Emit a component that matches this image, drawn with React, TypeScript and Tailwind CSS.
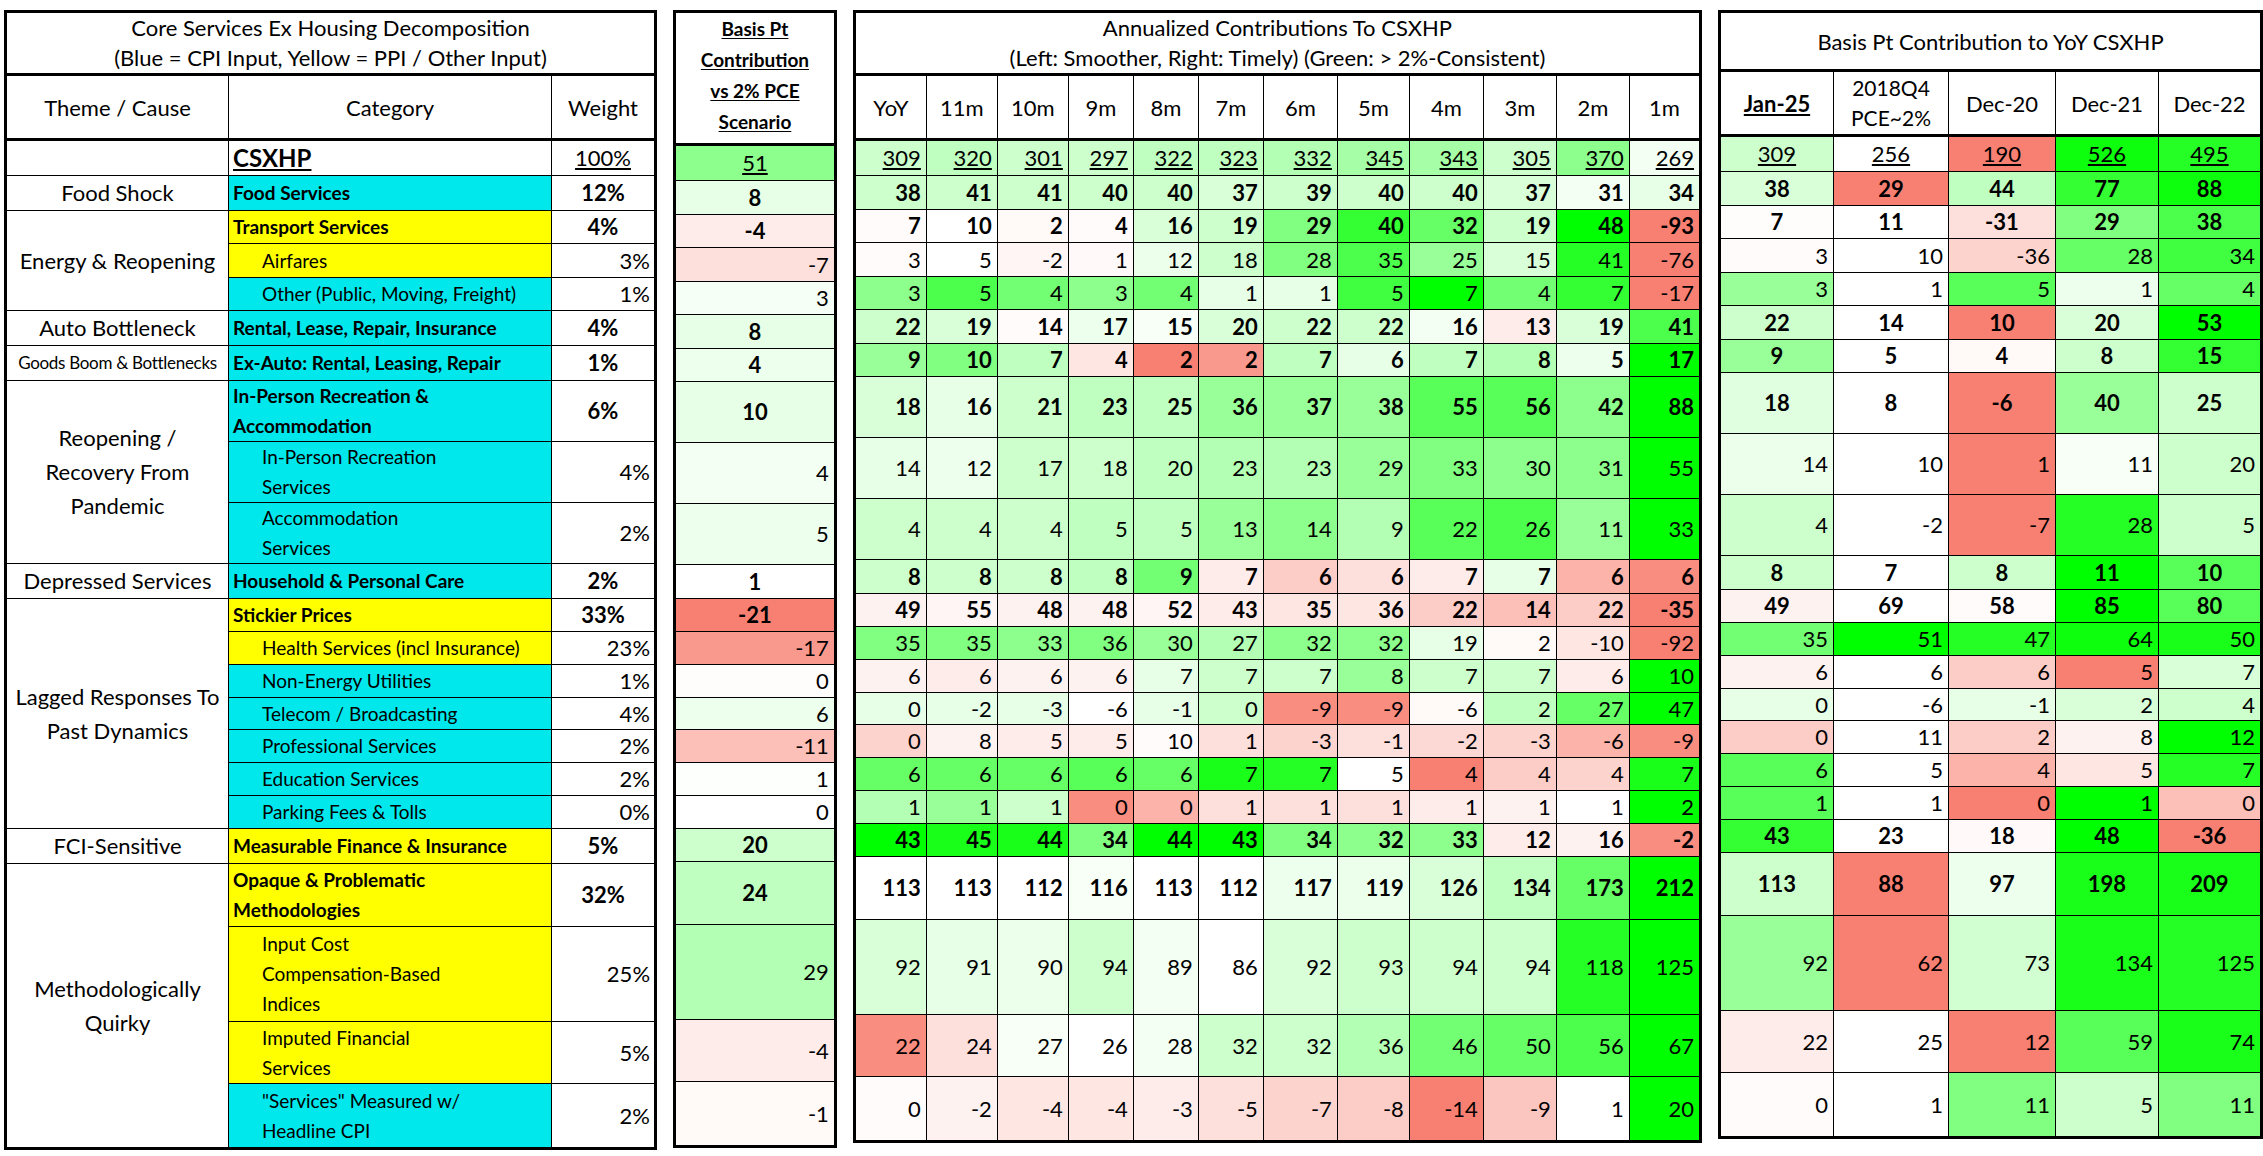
import React from "react";

type Cell = [number, number];
type Row = {
  cat: string[];
  kind: "total" | "main" | "sub";
  bg: "cyan" | "yellow" | "none";
  w: string;
  b: Cell;
  a: Cell[];
  r: Cell[];
  h: string;
  theme?: { lines: string[]; span: number; small?: boolean };
};

/* shade: + = green (0..10), - = red (0..-10) */
function shade(v: number) {
  if (v >= 0) {
    const c = Math.round(255 * (1 - v / 10));
    return `rgb(${c},255,${c})`;
  }
  const t = -v / 10;
  return `rgb(${Math.round(255 - 7 * t)},${Math.round(255 - 127 * t)},${Math.round(255 - 141 * t)})`;
}

const rows: Row[] = [
  {
    theme: { lines: [""], span: 1 },
    cat: ["CSXHP"], kind: "total", bg: "none", w: "100%", b: [51, 4.5], h: "h-[36px]",
    a: [[309, 2], [320, 2.5], [301, 2], [297, 2], [322, 2.5], [323, 2.5], [332, 3], [345, 3.5], [343, 3.5], [305, 2], [370, 4.5], [269, 0.5]],
    r: [[309, 2], [256, 0], [190, -10], [526, 9.5], [495, 8.5]],
  },
  {
    theme: { lines: ["Food Shock"], span: 1 },
    cat: ["Food Services"], kind: "main", bg: "cyan", w: "12%", b: [8, 1], h: "h-[34px]",
    a: [[38, 2], [41, 2], [41, 2], [40, 2], [40, 2], [37, 1.5], [39, 2], [40, 2], [40, 2], [37, 1.5], [31, 0.5], [34, 1]],
    r: [[38, 1.5], [29, -10], [44, 2.5], [77, 8], [88, 9.5]],
  },
  {
    theme: { lines: ["Energy & Reopening"], span: 3 },
    cat: ["Transport Services"], kind: "main", bg: "yellow", w: "4%", b: [-4, -1.5], h: "h-[33px]",
    a: [[7, -0.3], [10, 0], [2, -0.5], [4, -0.3], [16, 1.5], [19, 2], [29, 5], [40, 8], [32, 6], [19, 2], [48, 10], [-93, -10]],
    r: [[7, -0.2], [11, 0], [-31, -2.5], [29, 5], [38, 7]],
  },
  {
    cat: ["Airfares"], kind: "sub", bg: "yellow", w: "3%", b: [-7, -2.5], h: "h-[34px]",
    a: [[3, -0.3], [5, 0], [-2, -0.8], [1, -0.4], [12, 0.8], [18, 2], [28, 5], [35, 7], [25, 4], [15, 1.5], [41, 8.5], [-76, -10]],
    r: [[3, -0.3], [10, 0], [-36, -3.5], [28, 6], [34, 7.5]],
  },
  {
    cat: ["Other (Public, Moving, Freight)"], kind: "sub", bg: "cyan", w: "1%", b: [3, 0.4], h: "h-[33px]",
    a: [[3, 4.5], [5, 7], [4, 5.5], [3, 4.5], [4, 5.5], [1, 1], [1, 1], [5, 7.5], [7, 10], [4, 5.5], [7, 8], [-17, -10]],
    r: [[3, 4], [1, 0], [5, 6.5], [1, 0.7], [4, 6]],
  },
  {
    theme: { lines: ["Auto Bottleneck"], span: 1 },
    cat: ["Rental, Lease, Repair, Insurance"], kind: "main", bg: "cyan", w: "4%", b: [8, 1], h: "h-[34px]",
    a: [[22, 2], [19, 1.5], [14, -0.3], [17, 0.7], [15, 0.3], [20, 1.5], [22, 2], [22, 2], [16, 0.5], [13, -1.5], [19, 1.5], [41, 7]],
    r: [[22, 2], [14, 0], [10, -10], [20, 1.5], [53, 10]],
  },
  {
    theme: { lines: ["Goods Boom & Bottlenecks"], span: 1, small: true },
    cat: ["Ex-Auto: Rental, Leasing, Repair"], kind: "main", bg: "cyan", w: "1%", b: [4, 0.7], h: "h-[33px]",
    a: [[9, 4], [10, 5], [7, 2.5], [4, -2], [2, -10], [2, -8], [7, 2.5], [6, 1], [7, 2.5], [8, 3], [5, 0.7], [17, 10]],
    r: [[9, 4], [5, 0], [4, -0.5], [8, 2], [15, 8]],
  },
  {
    theme: { lines: ["Reopening /", "Recovery From", "Pandemic"], span: 3 },
    cat: ["In-Person Recreation &", "Accommodation"], kind: "main", bg: "cyan", w: "6%", b: [10, 1], h: "h-[61px]",
    a: [[18, 1.5], [16, 1], [21, 2], [23, 2.5], [25, 2.5], [36, 4], [37, 4], [38, 4], [55, 6.5], [56, 6.5], [42, 4.5], [88, 10]],
    r: [[18, 1.2], [8, 0], [-6, -10], [40, 4], [25, 2]],
  },
  {
    cat: ["In-Person Recreation", "Services"], kind: "sub", bg: "cyan", w: "4%", b: [4, 0.5], h: "h-[61px]",
    a: [[14, 1], [12, 0.7], [17, 2], [18, 2], [20, 2.5], [23, 3], [23, 3], [29, 4], [33, 5], [30, 4.5], [31, 4.5], [55, 10]],
    r: [[14, 0.8], [10, 0], [1, -10], [11, 0.3], [20, 2]],
  },
  {
    cat: ["Accommodation", "Services"], kind: "sub", bg: "cyan", w: "2%", b: [5, 0.7], h: "h-[61px]",
    a: [[4, 2], [4, 2], [4, 2], [5, 2.5], [5, 2.5], [13, 4], [14, 4.5], [9, 3], [22, 6.5], [26, 7], [11, 4], [33, 10]],
    r: [[4, 2], [-2, 0], [-7, -10], [28, 8.5], [5, 2]],
  },
  {
    theme: { lines: ["Depressed Services"], span: 1 },
    cat: ["Household & Personal Care"], kind: "main", bg: "cyan", w: "2%", b: [1, 0], h: "h-[34px]",
    a: [[8, 2], [8, 2], [8, 2], [8, 2.5], [9, 5.5], [7, -1.5], [6, -4], [6, -2.5], [7, -1.5], [7, 1], [6, -6], [6, -9]],
    r: [[8, 2], [7, 0], [8, 2], [11, 10], [10, 6.5]],
  },
  {
    theme: { lines: ["Lagged Responses To", "Past Dynamics"], span: 7 },
    cat: ["Stickier Prices"], kind: "main", bg: "yellow", w: "33%", b: [-21, -10], h: "h-[33px]",
    a: [[49, -1], [55, -0.8], [48, -1], [48, -1], [52, -0.8], [43, -1.5], [35, -2], [36, -2], [22, -4], [14, -5], [22, -4], [-35, -10]],
    r: [[49, -1], [69, 0], [58, -0.3], [85, 10], [80, 6.5]],
  },
  {
    cat: ["Health Services (incl Insurance)"], kind: "sub", bg: "yellow", w: "23%", b: [-17, -8], h: "h-[33px]",
    a: [[35, 5], [35, 5], [33, 4.5], [36, 5], [30, 4], [27, 3], [32, 4.5], [32, 4.5], [19, 1], [2, -0.5], [-10, -2], [-92, -10]],
    r: [[35, 5.5], [51, 10], [47, 8.5], [64, 9.5], [50, 9]],
  },
  {
    cat: ["Non-Energy Utilities"], kind: "sub", bg: "cyan", w: "1%", b: [0, -0.2], h: "h-[33px]",
    a: [[6, -1], [6, -1.5], [6, -1], [6, -1], [7, 1], [7, 2], [7, 2], [8, 4], [7, 2], [7, 2], [6, -1.5], [10, 10]],
    r: [[6, -1], [6, 0], [6, -4], [5, -10], [7, 1.5]],
  },
  {
    cat: ["Telecom / Broadcasting"], kind: "sub", bg: "cyan", w: "4%", b: [6, 0.7], h: "h-[32px]",
    a: [[0, 1], [-2, 1], [-3, 1], [-6, 0], [-1, 1], [0, 2], [-9, -9], [-9, -9], [-6, -0.5], [2, 2.5], [27, 6], [47, 10]],
    r: [[0, 1], [-6, 0], [-1, 1], [2, 1.5], [4, 2]],
  },
  {
    cat: ["Professional Services"], kind: "sub", bg: "cyan", w: "2%", b: [-11, -5], h: "h-[33px]",
    a: [[0, -3.5], [8, -1], [5, -1.5], [5, -1.5], [10, -0.3], [1, -2.5], [-3, -3.5], [-1, -2.5], [-2, -3], [-3, -3.5], [-6, -6], [-9, -9]],
    r: [[0, -4], [11, 0], [2, -4], [8, -1], [12, 10]],
  },
  {
    cat: ["Education Services"], kind: "sub", bg: "cyan", w: "2%", b: [1, 0.1], h: "h-[33px]",
    a: [[6, 6], [6, 6], [6, 6], [6, 6.5], [6, 6], [7, 9], [7, 8.5], [5, 0], [4, -10], [4, -4], [4, -3.5], [7, 9]],
    r: [[6, 6.5], [5, 0], [4, -6], [5, -2], [7, 8.5]],
  },
  {
    cat: ["Parking Fees & Tolls"], kind: "sub", bg: "cyan", w: "0%", b: [0, 0], h: "h-[33px]",
    a: [[1, 3], [1, 4], [1, 2], [0, -9], [0, -6], [1, -2.5], [1, -2.5], [1, -2.5], [1, -1.5], [1, -1], [1, 0], [2, 10]],
    r: [[1, 6.5], [1, 0], [0, -10], [1, 10], [0, -5]],
  },
  {
    theme: { lines: ["FCI-Sensitive"], span: 1 },
    cat: ["Measurable Finance & Insurance"], kind: "main", bg: "yellow", w: "5%", b: [20, 2], h: "h-[33px]",
    a: [[43, 10], [45, 9], [44, 9], [34, 5], [44, 10], [43, 10], [34, 5], [32, 4.5], [33, 4.5], [12, -1.5], [16, -1], [-2, -9]],
    r: [[43, 8], [23, 0], [18, -0.4], [48, 10], [-36, -10]],
  },
  {
    theme: { lines: ["Methodologically", "Quirky"], span: 4 },
    cat: ["Opaque & Problematic", "Methodologies"], kind: "main", bg: "yellow", w: "32%", b: [24, 2.5], h: "h-[63px]",
    a: [[113, 0], [113, 0], [112, 0], [116, 0.3], [113, 0], [112, 0], [117, 0.7], [119, 0.8], [126, 1.5], [134, 2.5], [173, 6], [212, 10]],
    r: [[113, 2], [88, -10], [97, 0.7], [198, 9], [209, 9]],
  },
  {
    cat: ["Input Cost", "Compensation-Based", "Indices"], kind: "sub", bg: "yellow", w: "25%", b: [29, 3], h: "h-[95px]",
    a: [[92, 1.5], [91, 1], [90, 0.8], [94, 2], [89, 0.5], [86, 0], [92, 1.5], [93, 2], [94, 2], [94, 2], [118, 8.5], [125, 10]],
    r: [[92, 4], [62, -10], [73, 1.8], [134, 9], [125, 8.5]],
  },
  {
    cat: ["Imputed Financial", "Services"], kind: "sub", bg: "yellow", w: "5%", b: [-4, -1.5], h: "h-[62px]",
    a: [[22, -9], [24, -2.5], [27, 0.3], [26, 0], [28, 0.5], [32, 2], [32, 2], [36, 3], [46, 5.5], [50, 6], [56, 7], [67, 10]],
    r: [[22, -1.5], [25, 0], [12, -10], [59, 6.5], [74, 9]],
  },
  {
    cat: ["\"Services\" Measured w/", "Headline CPI"], kind: "sub", bg: "cyan", w: "2%", b: [-1, -0.5], h: "h-[65px]",
    a: [[0, -0.3], [-2, -1], [-4, -2], [-4, -2], [-3, -1.5], [-5, -2.5], [-7, -3.5], [-8, -4], [-14, -10], [-9, -4.5], [1, 0], [20, 10]],
    r: [[0, -0.3], [1, 0], [11, 5], [5, 2], [11, 5]],
  },
];

const annualCols = ["YoY", "11m", "10m", "9m", "8m", "7m", "6m", "5m", "4m", "3m", "2m", "1m"];
const annualWidths = ["w-[72px]", "w-[71px]", "w-[71px]", "w-[65px]", "w-[65px]", "w-[65px]", "w-[74px]", "w-[72px]", "w-[74px]", "w-[73px]", "w-[73px]", "w-[71px]"];

const bgClass = { cyan: "bg-[#00e8ec]", yellow: "bg-[#ffff00]", none: "bg-white" };

function weightCls(kind: Row["kind"]) {
  if (kind === "main") return "font-bold";
  if (kind === "total") return "underline underline-offset-2";
  return "";
}

function NumCell({ c, kind, center }: { c: Cell; kind: Row["kind"]; center: boolean }) {
  return (
    <td
      className={`border border-black px-[5px] text-[22px] leading-none ${center ? "text-center" : "text-right"} ${weightCls(kind)}`}
      style={{ backgroundColor: shade(c[1]) }}
    >
      {c[0]}
    </td>
  );
}

export default function App() {
  return (
    <div className="min-h-screen w-[2263px] bg-white pl-[4px] pt-[10px] font-['Lato',sans-serif] text-black">
      <div className="flex items-start gap-[16px]">
        {/* left: theme / category / weight */}
        <table className="w-[650px] table-fixed border-collapse border-[3px] border-black">
          <colgroup>
            <col className="w-[223px]" />
            <col className="w-[323px]" />
            <col className="w-[104px]" />
          </colgroup>
          <thead>
            <tr className="h-[59px]">
              <th colSpan={3} className="border-b-[3px] border-black text-[22px] font-normal leading-[30px]">
                Core Services Ex Housing Decomposition
                <br />
                (Blue = CPI Input, Yellow = PPI / Other Input)
              </th>
            </tr>
            <tr className="h-[65px]">
              <th className="border border-b-[3px] border-black text-[22px] font-normal">Theme / Cause</th>
              <th className="border border-b-[3px] border-black text-[22px] font-normal">Category</th>
              <th className="border border-b-[3px] border-black text-[22px] font-normal">Weight</th>
            </tr>
          </thead>
          <tbody>
            {rows.map((row, i) => (
              <tr key={i} className={row.h}>
                {row.theme && (
                  <td
                    rowSpan={row.theme.span}
                    className={`border border-black px-1 text-center ${row.theme.small ? "text-[17px] tracking-[-0.3px]" : "text-[22px]"} leading-[34px]`}
                  >
                    {row.theme.lines.map((l, j) => (
                      <div key={j}>{l}</div>
                    ))}
                  </td>
                )}
                <td
                  className={`border border-black ${bgClass[row.bg]} ${
                    row.kind === "sub" ? "pl-[33px]" : "pl-[4px]"
                  } ${row.kind === "total" ? "text-[24px] font-bold underline underline-offset-2" : "text-[19px]"} ${
                    row.kind === "main" ? "font-bold" : ""
                  } leading-[30px]`}
                >
                  {row.cat.map((l, j) => (
                    <div key={j}>{l}</div>
                  ))}
                </td>
                <td
                  className={`border border-black px-[4px] text-[22px] leading-none ${
                    row.kind === "sub" ? "text-right" : "text-center"
                  } ${weightCls(row.kind)}`}
                >
                  {row.w}
                </td>
              </tr>
            ))}
          </tbody>
        </table>

        {/* basis pt vs 2% */}
        <table className="w-[164px] table-fixed border-collapse border-[3px] border-black">
          <thead>
            <tr className="h-[124px]">
              <th className="border border-b-[3px] border-black pb-[6px] text-[19px] font-bold leading-[31px] underline underline-offset-2">
                <div>Basis Pt</div>
                <div>Contribution</div>
                <div>vs 2% PCE</div>
                <div>Scenario</div>
              </th>
            </tr>
          </thead>
          <tbody>
            {rows.map((row, i) => (
              <tr key={i} className={row.h}>
                <NumCell c={row.b} kind={row.kind} center={row.kind !== "sub"} />
              </tr>
            ))}
          </tbody>
        </table>

        {/* annualized contributions */}
        <table className="w-[846px] table-fixed border-collapse border-[3px] border-black">
          <colgroup>
            {annualWidths.map((w, i) => (
              <col key={i} className={w} />
            ))}
          </colgroup>
          <thead>
            <tr className="h-[59px]">
              <th colSpan={12} className="border-b-[3px] border-black text-[22px] font-normal leading-[30px]">
                Annualized Contributions To CSXHP
                <br />
                (Left: Smoother, Right: Timely) (Green: &gt; 2%-Consistent)
              </th>
            </tr>
            <tr className="h-[65px]">
              {annualCols.map((c) => (
                <th key={c} className="border border-b-[3px] border-black text-[22px] font-normal">
                  {c}
                </th>
              ))}
            </tr>
          </thead>
          <tbody>
            {rows.map((row, i) => (
              <tr key={i} className={row.h}>
                {row.a.map((c, j) => (
                  <NumCell key={j} c={c} kind={row.kind} center={false} />
                ))}
              </tr>
            ))}
          </tbody>
        </table>

        {/* basis pt contribution to yoy */}
        <table className="w-[542px] table-fixed border-collapse border-[3px] border-black">
          <colgroup>
            <col className="w-[114px]" />
            <col className="w-[115px]" />
            <col className="w-[107px]" />
            <col className="w-[103px]" />
            <col className="w-[103px]" />
          </colgroup>
          <thead>
            <tr className="h-[59px]">
              <th colSpan={5} className="border-b-[3px] border-black text-[22px] font-normal">
                Basis Pt Contribution to YoY CSXHP
              </th>
            </tr>
            <tr className="h-[65px]">
              <th className="border border-b-[3px] border-black text-[22px] font-bold underline underline-offset-2">Jan-25</th>
              <th className="border border-b-[3px] border-black text-[21px] font-normal leading-[30px]">
                2018Q4
                <br />
                PCE~2%
              </th>
              <th className="border border-b-[3px] border-black text-[22px] font-normal">Dec-20</th>
              <th className="border border-b-[3px] border-black text-[22px] font-normal">Dec-21</th>
              <th className="border border-b-[3px] border-black text-[22px] font-normal">Dec-22</th>
            </tr>
          </thead>
          <tbody>
            {rows.map((row, i) => (
              <tr key={i} className={row.h}>
                {row.r.map((c, j) => (
                  <NumCell key={j} c={c} kind={row.kind} center={row.kind !== "sub"} />
                ))}
              </tr>
            ))}
          </tbody>
        </table>
      </div>
    </div>
  );
}
